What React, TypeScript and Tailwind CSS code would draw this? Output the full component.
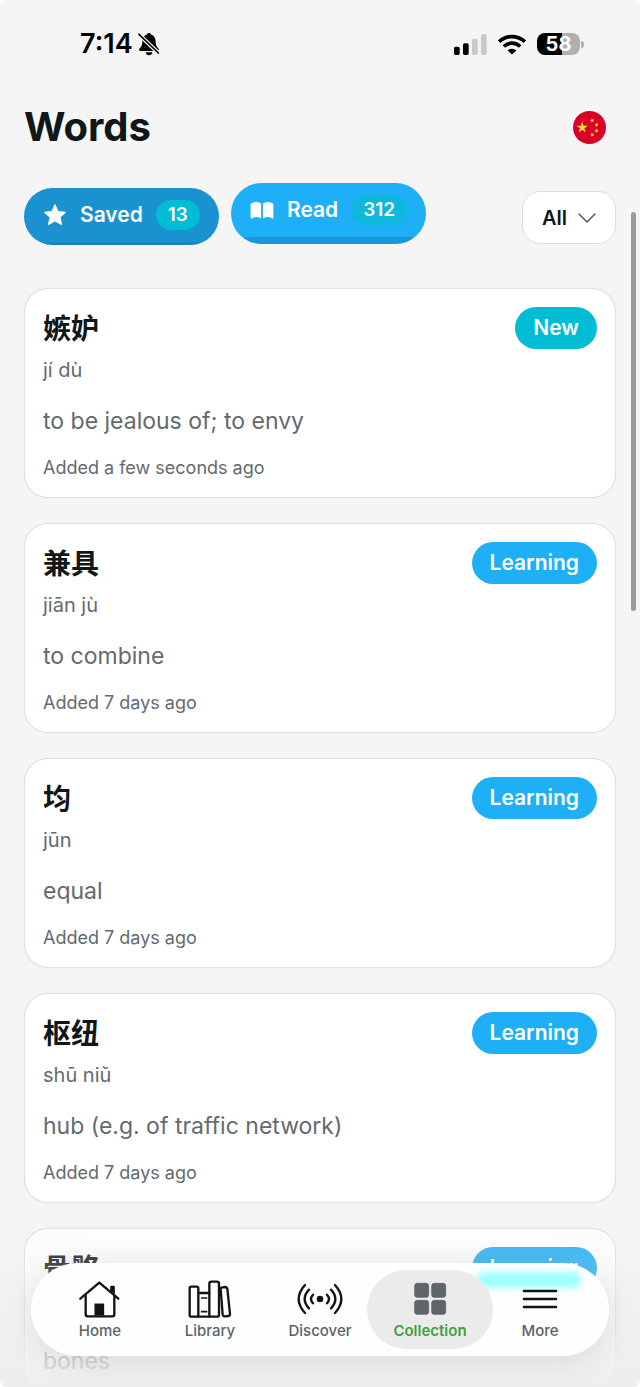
import React from "react";

type Word = { hanzi: string; pinyin: string; meaning: string; added?: string; status: "New" | "Learning" };

const words: Word[] = [
  { hanzi: "嫉妒", pinyin: "jí dù", meaning: "to be jealous of; to envy", added: "Added a few seconds ago", status: "New" },
  { hanzi: "兼具", pinyin: "jiān jù", meaning: "to combine", added: "Added 7 days ago", status: "Learning" },
  { hanzi: "均", pinyin: "jūn", meaning: "equal", added: "Added 7 days ago", status: "Learning" },
  { hanzi: "枢纽", pinyin: "shū niǔ", meaning: "hub (e.g. of traffic network)", added: "Added 7 days ago", status: "Learning" },
  { hanzi: "骨骼", pinyin: "gǔ gé", meaning: "bones", status: "Learning" },
];

const STAR = "M12 1.6l3.1 6.9 7.5.8-5.6 5 1.6 7.4L12 17.9l-6.6 3.8L7 14.3l-5.6-5 7.5-.8z";

function BellOff() {
  return (
    <svg viewBox="0 0 66 72" className="h-6 w-[22px]" aria-hidden="true">
      <path d="M23 61h20a10 8.500 0 0 1-20 0z" />
      <path d="M8 57c-6 0-6-5-2-9 5-5 7-10 7-18 0-13 6-20 13-22 2-7 12-7 14 0 8 2 13 10 13 22 0 8 2 13 7 18 4 4 4 9-2 9z" />
      <path d="M3 7l58 56" stroke="#f5f5f5" strokeWidth="12" />
      <path d="M3 7l58 56" stroke="#000" strokeWidth="5" strokeLinecap="round" />
    </svg>
  );
}

function StatusBar() {
  return (
    <div className="flex h-[88px] items-center justify-between pr-8 pl-14 text-black">
      <div className="flex items-center gap-[5px]">
        <span className="text-[27px] leading-8 font-semibold">7:14</span>
        <BellOff />
      </div>
      <div className="flex items-center gap-[11px]">
        <svg viewBox="0 0 99 63" className="h-[21px] w-[33px]" aria-hidden="true">
          <rect x="0" y="38" width="17" height="25" rx="5" />
          <rect x="27" y="28" width="17" height="35" rx="5" />
          <rect x="54" y="14" width="17" height="49" rx="5" fill="#c9c9c9" />
          <rect x="81" y="1" width="17" height="62" rx="5" fill="#c9c9c9" />
        </svg>
        <svg viewBox="0 0 84 62" className="h-[21px] w-7" aria-hidden="true" fill="none" stroke="#000" strokeWidth="11">
          <path d="M3.500 22.500a56 56 0 0 1 77 0" />
          <path d="M17.500 37a35 35 0 0 1 49 0" />
          <path d="M42 61L29 49a19 19 0 0 1 26 0z" fill="#000" stroke="none" />
        </svg>
        <div className="flex items-center gap-px">
          <span className="flex h-[22px] w-[43px] items-center justify-center rounded-lg bg-linear-to-r from-black from-58% to-[#b0b0b0] to-58% text-[20px] leading-[22px] font-bold text-white">
            58
          </span>
          <span className="h-[7px] w-[3px] rounded-r-full bg-[#b0b0b0]" />
        </div>
      </div>
    </div>
  );
}

function Flag() {
  return (
    <svg viewBox="0 0 100 100" className="size-[33px]" role="img" aria-label="Chinese">
      <circle cx="50" cy="50" r="50" fill="#d80027" />
      <g fill="#ffda44">
        <path d="M28 32l4 12.500h13.500l-11 8 4.300 13L28 57.500 17.200 65.500l4.300-13-11-8H24z" />
        <path d="M56 22l3 4 5-1-3 4.200 3 4.200-5-1.400-3 4v-5l-5-1.600 5-1.800z" />
        <path d="M69 35l3 4 5-1-3 4.200 3 4.200-5-1.400-3 4v-5l-5-1.600 5-1.800z" />
        <path d="M69 53l3 4 5-1-3 4.200 3 4.200-5-1.400-3 4v-5l-5-1.600 5-1.800z" />
        <path d="M56 65l3 4 5-1-3 4.200 3 4.200-5-1.400-3 4v-5l-5-1.600 5-1.800z" />
      </g>
    </svg>
  );
}

function Filters() {
  return (
    <div className="flex items-start gap-3">
      <button
        type="button"
        aria-pressed="true"
        className="mt-[5px] flex h-[57px] items-center gap-[13px] rounded-full bg-[linear-gradient(to_top,#1583bd_2px,#1a92cf_3px)] px-[19px] pb-1 text-white"
      >
        <svg viewBox="0 0 24 24" className="size-6" fill="currentColor" stroke="currentColor" strokeWidth="1" strokeLinejoin="round" aria-hidden="true">
          <path d={STAR} />
        </svg>
        <span className="text-[21px] leading-7 font-semibold">Saved</span>
        <span className="rounded-full bg-[#00bcd4] px-3 text-[19px] leading-[30px] font-semibold">13</span>
      </button>
      <button
        type="button"
        aria-pressed="false"
        className="flex h-[61px] items-center gap-[13px] rounded-full bg-[linear-gradient(to_top,#1a97d8_7px,#1eaff6_7px)] px-[19px] pb-[7px] text-white"
      >
        <svg viewBox="0 0 78 60" className="h-[19px] w-6" fill="currentColor" aria-hidden="true">
          <path d="M2 8Q18-3 36 7v49Q20 47 6 56q-4 1-4-3z" />
          <path d="M76 8Q60-3 42 7v49q16-9 30 0 4 1 4-3z" />
        </svg>
        <span className="text-[21px] leading-7 font-semibold">Read</span>
        <span className="rounded-full bg-[#0db8dc] px-3 text-[19px] leading-[30px] font-semibold">312</span>
      </button>
      <div className="relative mt-2 ml-auto">
        <select
          aria-label="Filter words"
          className="h-[53px] w-[94px] appearance-none rounded-[18px] border border-[#dcdddd] bg-white pl-[19px] text-[20px] font-semibold text-[#0f1719]"
        >
          <option>All</option>
          <option>New</option>
          <option>Learning</option>
        </select>
        <svg viewBox="0 0 18 10" className="pointer-events-none absolute top-[22px] right-5 h-[10px] w-[18px]" fill="none" stroke="#555" strokeWidth="1.500" strokeLinecap="round" strokeLinejoin="round" aria-hidden="true">
          <path d="M1 1l8 8 8-8" />
        </svg>
      </div>
    </div>
  );
}

function WordCard({ word }: { word: Word }) {
  return (
    <li className="flex items-start justify-between rounded-3xl border border-[#dfe0e0] bg-white p-[18px] shadow-[0_0_1px_#dfe0e0]">
      <div className="text-[#636a6e]">
        <h2 lang="zh-CN" className="text-[28px] leading-[44px] font-bold text-[#0f1719]">{word.hanzi}</h2>
        <p className="mt-1.5 text-[20px] leading-[26px]">{word.pinyin}</p>
        <p className="mt-[22px] text-[23px] leading-8">{word.meaning}</p>
        {word.added && <p className="mt-5 text-[18px] leading-[22px]">{word.added}</p>}
      </div>
      <span className={`rounded-full px-[18px] text-[21px] leading-[42px] font-semibold text-white ${word.status === "New" ? "bg-[#00bcd4]" : "bg-[#1eaff6]"}`}>
        {word.status}
      </span>
    </li>
  );
}

function HomeIcon() {
  return (
    <svg viewBox="0 0 132 114" className="h-[38px] w-11" fill="none" stroke="#111415" strokeWidth="7" strokeLinecap="round" strokeLinejoin="round" aria-hidden="true">
      <path d="M7 56L64 8l57 48" />
      <path d="M23 46v57q0 6 6 6h74q6 0 6-6V46" />
      <path d="M100 34V21h7v20" />
      <path d="M50 106V71h28v35z" fill="#111415" strokeWidth="1" />
    </svg>
  );
}

function LibraryIcon() {
  return (
    <svg viewBox="0 0 132 114" className="h-[38px] w-11" fill="none" stroke="#111415" strokeWidth="7" strokeLinecap="round" strokeLinejoin="round" aria-hidden="true">
      <rect x="5" y="20" width="26" height="90" rx="5" />
      <path d="M31 39h33M31 110h33" />
      <path d="M41 54h15M41 95h15" strokeWidth="5" />
      <rect x="64" y="5" width="29" height="105" rx="6" />
      <path d="M103 22l9-1q5 0 6 5l8 76q0 6-5 6l-11 1q-5 0-6-5l-6-77q0-5 5-5z" />
    </svg>
  );
}

function DiscoverIcon() {
  return (
    <svg viewBox="0 0 138 114" className="h-[38px] w-[46px]" fill="none" stroke="#111415" strokeWidth="7" strokeLinecap="round" aria-hidden="true">
      <circle cx="69" cy="57" r="10" fill="#111415" stroke="none" />
      <path d="M48 44q-12 13 0 26M36 29q-26 28 0 56M24 15q-38 42 0 84" />
      <path d="M90 44q12 13 0 26M102 29q26 28 0 56M114 15q38 42 0 84" />
    </svg>
  );
}

function CollectionIcon() {
  return (
    <svg viewBox="0 0 132 114" className="h-[38px] w-11" fill="#5f666a" stroke="#4f565a" strokeWidth="2" aria-hidden="true">
      <rect x="20" y="10" width="42" height="42" rx="8" />
      <rect x="71" y="10" width="42" height="42" rx="8" />
      <rect x="20" y="61" width="42" height="42" rx="8" />
      <rect x="71" y="61" width="42" height="42" rx="8" />
    </svg>
  );
}

function MoreIcon() {
  return (
    <svg viewBox="0 0 132 114" className="h-[38px] w-11" stroke="#111415" strokeWidth="8" strokeLinecap="round" aria-hidden="true">
      <path d="M18 33h96M18 57h96M18 81h96" />
    </svg>
  );
}

const tabs = [
  { label: "Home", Icon: HomeIcon },
  { label: "Library", Icon: LibraryIcon },
  { label: "Discover", Icon: DiscoverIcon },
  { label: "Collection", Icon: CollectionIcon },
  { label: "More", Icon: MoreIcon },
];

function TabBar() {
  return (
    <nav aria-label="Main" className="absolute inset-x-[31px] bottom-[31px] rounded-full bg-[#fdfefe] px-[14px] py-[7px] shadow-[0_4px_32px_rgba(0,0,0,0.1)]">
      <div className="absolute top-[9px] right-[28px] h-4 w-[104px] rounded-full bg-[#9dffff] blur-[3px]" />
      <div className="relative grid grid-cols-5">
        {tabs.map(({ label, Icon }) => {
          const active = label === "Collection";
          return (
            <a
              key={label}
              href={`#${label.toLowerCase()}`}
              aria-current={active ? "page" : undefined}
              className={`flex h-[79px] flex-col items-center gap-[3px] pt-[10px] text-[15px] leading-5 ${active ? "-mx-2 rounded-full bg-[#ebebec] font-semibold text-[#3f9f41]" : "font-medium text-[#5c6367]"}`}
            >
              <Icon />
              <span>{label}</span>
            </a>
          );
        })}
      </div>
    </nav>
  );
}

export default function App() {
  return (
    <div className="relative h-screen overflow-hidden rounded-lg bg-[#f5f5f5] font-['Inter','Noto_Sans_CJK_SC',sans-serif]">
      <main className="h-full overflow-y-auto px-6 pb-32 [scrollbar-width:none]">
        <StatusBar />
        <header className="flex items-center justify-between pt-[14px] pr-[10px]">
          <h1 className="text-[40px] leading-[50px] font-bold text-[#0f1719]">Words</h1>
          <Flag />
        </header>
        <div className="pt-[31px] pb-[43px]">
          <Filters />
        </div>
        <ul className="flex flex-col gap-[25px]">
          {words.map((word) => (
            <WordCard key={word.hanzi} word={word} />
          ))}
        </ul>
      </main>
      <div className="absolute top-[212px] right-1 h-[399px] w-[5px] rounded-full bg-[#9b9b9b]" />
      <div className="pointer-events-none absolute inset-x-0 bottom-0 h-[190px] bg-linear-to-b from-[#ededed]/0 via-[#ededed]/35 to-[#ededed]/95" />
      <TabBar />
    </div>
  );
}
